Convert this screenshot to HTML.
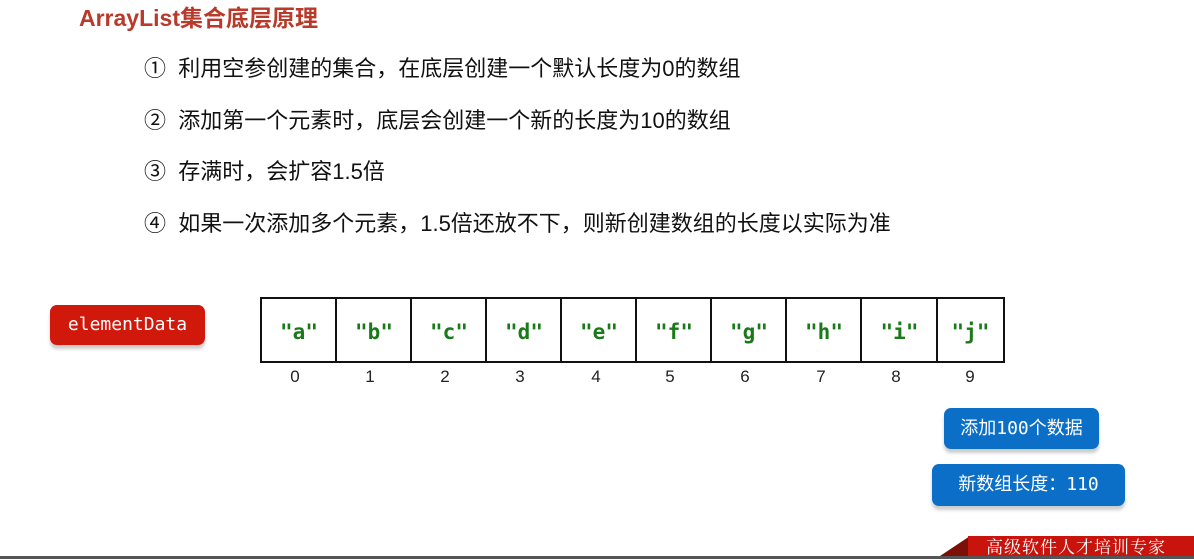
<!DOCTYPE html>
<html><head><meta charset="utf-8"><style>
body{margin:0;width:1194px;height:559px;background:#fff;position:relative;overflow:hidden;font-family:"Liberation Sans","Noto Sans CJK SC",sans-serif}
.t{position:absolute;left:79px;top:-1px;font-size:23px;font-weight:bold;color:#b83a2b;white-space:nowrap}
.li{position:absolute;left:144px;font-size:22px;color:#111;white-space:nowrap}
.cell{position:absolute;top:297px;height:62px;border:2px solid #111;border-right:none;box-sizing:content-box;font-family:"DejaVu Sans Mono",monospace;font-weight:bold;color:#1a7a1a;font-size:21px;text-align:center;line-height:66px}
.idx{position:absolute;top:367px;font-size:17px;color:#222;text-align:center;width:30px}
.btn{position:absolute;color:#fff;border-radius:7px;text-align:center;box-shadow:0 4px 3px #ccc;font-family:"DejaVu Sans Mono","Noto Sans CJK SC",monospace;font-size:18px}
</style></head><body>
<div class="t">ArrayList集合底层原理</div>
<div class="li" style="top:51px">①&nbsp; 利用空参创建的集合，在底层创建一个默认长度为0的数组</div>
<div class="li" style="top:103px">②&nbsp; 添加第一个元素时，底层会创建一个新的长度为10的数组</div>
<div class="li" style="top:154px">③&nbsp; 存满时，会扩容1.5倍</div>
<div class="li" style="top:206px">④&nbsp; 如果一次添加多个元素，1.5倍还放不下，则新创建数组的长度以实际为准</div>
<div class="btn" style="left:50px;top:305px;width:155px;height:40px;line-height:40px;background:#d0180b">elementData</div>
<div class="cell" style="left:260px;width:74px">"a"</div>
<div class="cell" style="left:335px;width:74px">"b"</div>
<div class="cell" style="left:410px;width:74px">"c"</div>
<div class="cell" style="left:485px;width:74px">"d"</div>
<div class="cell" style="left:560px;width:74px">"e"</div>
<div class="cell" style="left:635px;width:74px">"f"</div>
<div class="cell" style="left:710px;width:74px">"g"</div>
<div class="cell" style="left:785px;width:74px">"h"</div>
<div class="cell" style="left:860px;width:75px">"i"</div>
<div class="cell" style="left:936px;width:65px;border-right:2px solid #111">"j"</div>
<div class="idx" style="left:280px">0</div><div class="idx" style="left:355px">1</div><div class="idx" style="left:430px">2</div><div class="idx" style="left:505px">3</div><div class="idx" style="left:581px">4</div><div class="idx" style="left:655px">5</div><div class="idx" style="left:730px">6</div><div class="idx" style="left:806px">7</div><div class="idx" style="left:881px">8</div><div class="idx" style="left:955px">9</div>
<div class="btn" style="left:944px;top:408px;width:155px;height:41px;line-height:41px;background:#0b6fc7">添加100个数据</div>
<div class="btn" style="left:932px;top:464px;width:193px;height:42px;line-height:42px;background:#0b6fc7">新数组长度：110</div>
<div style="position:absolute;left:940px;top:536px;width:0;height:0;border-bottom:20px solid #7a1008;border-left:30px solid transparent"></div>
<div style="position:absolute;left:968px;top:536px;width:226px;height:20px;background:#c8140c;color:#fff;font-family:'Noto Serif CJK SC',serif;font-size:17px;line-height:20px;padding-left:18px;letter-spacing:1px">高级软件人才培训专家</div>
<div style="position:absolute;left:0;top:556px;width:1194px;height:3px;background:#555"></div>
</body></html>
